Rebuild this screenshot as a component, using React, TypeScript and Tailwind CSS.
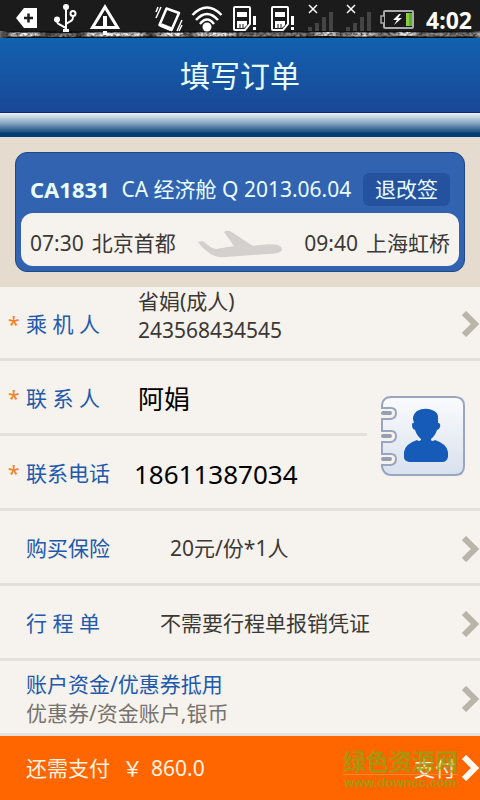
import { useState } from 'react';
import type { ReactNode } from 'react';

function StatusIcons() {
  return (
    <svg viewBox="0 0 420 38" className="h-[38px] w-[420px] shrink-0" fill="none" aria-hidden="true">
      {/* backspace tag */}
      <path d="M16 18 24 8H37V28H24Z" fill="#fff" />
      <path d="M24 18H33M28.500 13.500V22.500" stroke="#1c1c1c" strokeWidth="2.500" />

      {/* usb */}
      <g stroke="#fff" strokeWidth="2">
        <path d="M66 8V31M66 28 58.500 24Q57 23 57 20.500M66 24 71 21Q73 20 73 17" />
        <circle cx="73" cy="13.500" r="2.500" />
      </g>
      <circle cx="66" cy="7" r="3" fill="#fff" />
      <circle cx="57" cy="19.500" r="3" fill="#fff" />
      <path d="M63 29H69V32H63Z" fill="#fff" />

      {/* warning */}
      <path d="M105 7 117.500 27.500H92.500Z" stroke="#fff" strokeWidth="3" />
      <path d="M105 16V28M105 31V35" stroke="#fff" strokeWidth="4" />

      {/* vibrate */}
      <g stroke="#fff">
        <path d="M166.500 8.500 179 13 171.500 30 159.500 25Z" strokeWidth="2.500" strokeLinejoin="round" />
        <path d="M161 25 171 29" strokeWidth="4" />
        <path d="M161 7 156 18M158 7 156 12M182 20 177 31M182 25 179 31" strokeWidth="1.500" />
      </g>

      {/* wifi */}
      <circle cx="207" cy="27" r="4.500" fill="#fff" />
      <path d="M192.500 15Q207 0 221.500 15M196 20Q207 8 218 20M200 24Q207 15 214 24" stroke="#fff" strokeWidth="2.500" />

      {/* sim cards */}
      <SimCard x={232} />
      <SimCard x={270} />

      {/* signal bars */}
      <SignalBars x={308} />
      <SignalBars x={346} />

      {/* battery */}
      <rect x="384" y="11" width="29" height="17" rx="1" fill="#191919" stroke="#aaa" strokeWidth="2" />
      <path d="M384 16H381V23H384" fill="#191919" stroke="#aaa" strokeWidth="1.500" />
      <rect x="406" y="13" width="6" height="13" fill="#62ac2b" />
      <rect x="406" y="13" width="3" height="13" fill="#86ce43" />
      <path d="M399 14 393 20H397L394 25 402 18H398L401 14Z" fill="#fff" />
    </svg>
  );
}

function SimCard({ x }: { x: number }) {
  return (
    <g transform={`translate(${x} 0)`}>
      <path d="M2 8Q2 7 3 7H17Q18 7 18 8V24L13 30H3Q2 30 2 29Z" stroke="#fff" strokeWidth="2" />
      <path d="M5 12H15V17H5ZM5 21H15V25L12 28H5Z" fill="#fff" />
      <path d="M8 24V29M11 24V29" stroke="#1b1b1b" />
      <path d="M22.500 16V25M22.500 27V30" stroke="#fff" strokeWidth="3" />
    </g>
  );
}

function SignalBars({ x }: { x: number }) {
  return (
    <g transform={`translate(${x} 0)`}>
      <path d="M1 5 9 13M9 5 1 13" stroke="#fff" strokeWidth="1.500" />
      <path d="M2 27V31M9 23V31M16 17V31M23 12V31" stroke="#444" strokeWidth="4" />
    </g>
  );
}

// Torn, grainy edge under the status bar
function GrungeEdge() {
  return (
    <svg
      viewBox="0 0 480 7"
      preserveAspectRatio="none"
      className="absolute inset-x-0 bottom-0 h-[7px] w-full"
      aria-hidden="true"
    >
      <filter id="grunge" x="0" y="0" width="480" height="7" filterUnits="userSpaceOnUse" colorInterpolationFilters="sRGB">
        <feGaussianBlur in="SourceGraphic" stdDeviation="4 0.6" result="streaks" />
        <feTurbulence type="fractalNoise" baseFrequency="0.3 0.4" numOctaves="2" seed="8" />
        <feColorMatrix values="1.500 0 0 0 0  1.500 0 0 0 0  1.500 0 0 0 0  0 0 0 0 1" />
        <feBlend in="streaks" mode="multiply" />
      </filter>
      <g filter="url(#grunge)">
        <rect width="480" height="7" fill="#161616" />
        <path d="M8 3.500H42M84 3.500H146M156 3.500H186M194 3.500H234M314 3H334M352 3.500H372M398 3H414" stroke="#f2f2f2" strokeWidth="4" />
        <path d="M50 4H76M236 3.500H308M334 3.500H352M372 3.500H398M414 3.500H480" stroke="#8c8c8c" strokeWidth="4" />
      </g>
    </svg>
  );
}

function Plane() {
  return (
    <svg viewBox="0 0 84 28" className="h-7 w-[84px] shrink-0" fill="#d3d0cd" aria-hidden="true">
      <path d="M0 12 5 11Q12 18 18 19L36 16 26 2Q28 0 32 1L55 16Q70 13 80 15Q85 17 84 20Q82 24 70 24L28 27Q16 28 10 22Q3 17 0 12Z" />
    </svg>
  );
}

function ContactBook() {
  return (
    <svg viewBox="0 0 84 80" className="h-20 w-[84px]" aria-hidden="true">
      <defs>
        <linearGradient id="book" x1="0" y1="0" x2="0" y2="1">
          <stop offset="0" stopColor="#fafbfd" />
          <stop offset="1" stopColor="#d9e1ee" />
        </linearGradient>
      </defs>
      <path
        d="M10 1H74Q83 1 83 10V70Q83 79 74 79H10Q3 79 1 71V69H10Q15 68 15 63Q15 58 10 58H1V46H10Q15 45 15 40Q15 35 10 35H1V23H10Q15 22 15 17Q15 12 10 12H1V9Q2 1 10 1Z"
        fill="url(#book)"
        stroke="#9aa6bf"
        strokeWidth="2"
      />
      <path d="M2 17H9M2 40H9M2 63H9" stroke="#959fb5" strokeWidth="4" strokeLinecap="round" />
      <path
        d="M32 23Q32 18 36 15Q43 11 51 14Q57 16 57 21V27Q60 27 59 31Q58 34 56 34Q54 40 50 43V44Q51 46 54 44Q66 48 67 56V61Q66 66 61 66H28Q23 65 23 61V56Q24 48 36 44Q38 46 40 44V43Q36 40 34 34Q31 33 31 29Q31 26 33 27Z"
        fill="#165bb7"
      />
    </svg>
  );
}

function Chevron({ className }: { className: string }) {
  return (
    <svg viewBox="0 0 18 26" className={`h-[26px] w-[18px] shrink-0 ${className}`} fill="none" aria-hidden="true">
      <path d="M2 2 13 13 2 24" stroke="currentColor" strokeWidth="6" />
    </svg>
  );
}

const rowClass = 'flex w-full items-center border-b-[3px] border-[#e3dfdb] pt-[3px] text-left';

function Label({ required, children }: { required?: boolean; children: ReactNode }) {
  return (
    <span className="flex shrink-0 pl-2 text-[#2159ad]">
      <span className="w-[18px] text-[#f58025]">{required ? '*' : ''}</span>
      {children}
    </span>
  );
}

export default function App() {
  const [name, setName] = useState('阿娟');
  const [phone, setPhone] = useState('18611387034');

  return (
    <div className="flex min-h-screen flex-col bg-[#f6f2ed] font-['Noto_Sans','Noto_Sans_CJK_SC',sans-serif] text-[21px] leading-[29px] text-[#3b3835]">
      {/* Status bar */}
      <div className="relative flex h-[38px] justify-between overflow-hidden bg-[#1b1b1b]">
        <GrungeEdge />
        <div className="relative">
          <StatusIcons />
        </div>
        <span className="relative pt-1 pr-2 text-[23px] leading-8 font-bold text-white">4:02</span>
      </div>

      {/* Title */}
      <header className="flex h-[75px] items-center justify-center border-b border-[#0d2c62] bg-linear-to-b from-[#1261b0] to-[#184896] pt-0.5">
        <h1 className="text-[30px] leading-10 text-[#e9fdff]">填写订单</h1>
      </header>
      <div className="h-6 bg-linear-to-b from-[#eef4fa] via-[#7f9fbd] via-45% to-[#003f75] to-85%" />

      {/* Flight card */}
      <section className="bg-[#e5dccf] p-[15px]">
        <div className="rounded-xl border border-[#204887] bg-[#3163b0] px-[5px] pb-[5px]">
          <div className="flex h-[60px] items-center justify-between px-[9px] pt-3 text-[#e9fdff]">
            <strong className="text-[22px] font-bold">CA1831</strong>
            <span className="whitespace-nowrap">CA 经济舱 Q 2013.06.04</span>
            <button className="h-[33px] rounded-md bg-[#24529f] px-3">退改签</button>
          </div>
          <div className="flex h-[53px] items-center justify-between rounded-xl bg-[#f6f3ef] px-[9px] pt-2">
            <span className="flex gap-2">
              <span>07:30</span>
              <span>北京首都</span>
            </span>
            <Plane />
            <span className="flex gap-2">
              <span>09:40</span>
              <span>上海虹桥</span>
            </span>
          </div>
        </div>
      </section>

      {/* Order form */}
      <main className="flex-1">
        <button className={`h-[74px] ${rowClass}`}>
          <Label required>乘 机 人</Label>
          <span className="-mt-4 flex-1 pl-[38px]">
            省娟(成人)
            <br />
            243568434545
          </span>
          <Chevron className="text-[#b9b5aa]" />
        </button>

        <div className="flex items-center border-b-[3px] border-[#e3dfdb]">
          <div className="min-w-0 flex-1">
            <label className={`h-[75px] ${rowClass}`}>
              <Label required>联 系 人</Label>
              <input
                className="ml-[38px] w-0 flex-1 text-[26px] leading-9 text-black outline-none"
                value={name}
                onChange={(e) => setName(e.target.value)}
              />
            </label>
            <label className="flex h-[72px] items-center pt-[3px]">
              <Label required>联系电话</Label>
              <input
                type="tel"
                className="ml-6 w-0 flex-1 text-[26px] leading-9 text-black outline-none"
                value={phone}
                onChange={(e) => setPhone(e.target.value)}
              />
            </label>
          </div>
          <button className="pt-[3px] pr-[15px] pl-[14px]" aria-label="联系人">
            <ContactBook />
          </button>
        </div>

        <button className={`h-[75px] ${rowClass}`}>
          <Label>购买保险</Label>
          <span className="flex-1 pl-[60px]">20元/份*1人</span>
          <Chevron className="text-[#b9b5aa]" />
        </button>

        <button className={`h-[75px] ${rowClass}`}>
          <Label>行 程 单</Label>
          <span className="flex-1 pl-[60px]">不需要行程单报销凭证</span>
          <Chevron className="text-[#b9b5aa]" />
        </button>

        <button className={`h-[75px] ${rowClass}`}>
          <span className="flex-1 pl-[26px] text-[#77736e]">
            <span className="block text-[#2159ad]">账户资金/优惠券抵用</span>
            优惠券/资金账户,银币
          </span>
          <Chevron className="text-[#b9b5aa]" />
        </button>
      </main>

      {/* Payment bar */}
      <footer className="relative flex h-16 items-center justify-between bg-[#ff6600] pl-[26px] text-[#fff3e2]">
        <div className="flex">
          <span>还需支付</span>
          <span className="pr-2 pl-3">￥</span>
          <span>860.0</span>
        </div>
        <button className="flex items-center gap-1.5">
          支付
          <Chevron className="text-[#fffaf2]" />
        </button>
        <div className="pointer-events-none absolute top-3 right-[22px] text-center text-[#8fa312]/80">
          <div className="border-b border-[#e5a04a]/60 text-[23px] leading-[26px] font-bold">绿色资源网</div>
          <div className="font-['Liberation_Sans',sans-serif] text-[13px] leading-4 font-bold">www.downcc.com</div>
        </div>
      </footer>
    </div>
  );
}
